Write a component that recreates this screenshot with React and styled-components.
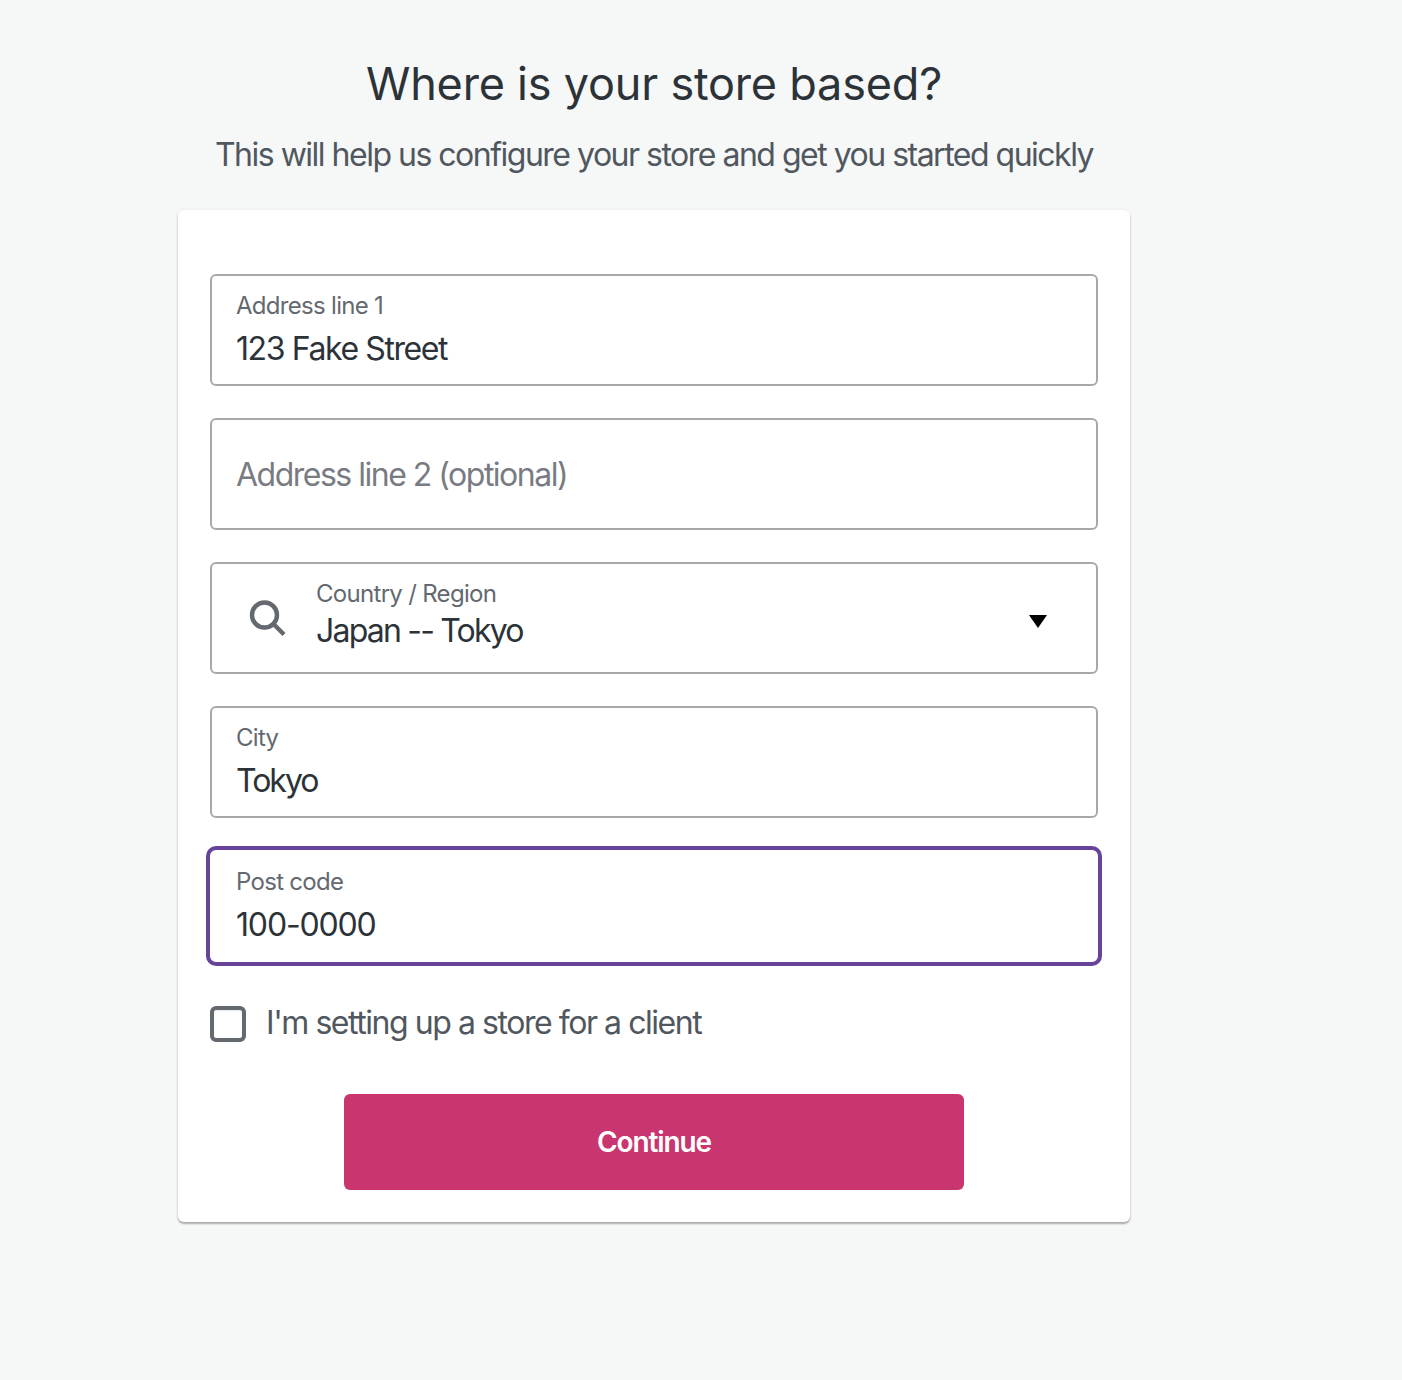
import React from "react";
import styled, { createGlobalStyle } from "styled-components";

const GlobalStyle = createGlobalStyle`
  html, body {
    margin: 0;
    padding: 0;
    background-color: #f6f7f7;
    font-family: Inter, "Liberation Sans", sans-serif;
  }
`;

const Page = styled.div`
  box-sizing: border-box;
  width: 1402px;
  height: 1380px;
  padding: 0 0 0 178px;
`;

const Column = styled.div`
  width: 952px;
  display: flex;
  flex-direction: column;
  align-items: center;
`;

const Title = styled.h1`
  margin: 54px 0 0 0;
  height: 60px;
  font-size: 45px;
  line-height: 60px;
  font-weight: 400;
  letter-spacing: -0.2px;
  color: #2c3338;
  white-space: nowrap;
`;

const Subtitle = styled.p`
  margin: 18px 0 0 0;
  height: 48px;
  font-size: 32px;
  line-height: 46px;
  font-weight: 400;
  letter-spacing: -1.5px;
  color: #50575e;
  white-space: nowrap;
`;

const Card = styled.form`
  box-sizing: border-box;
  width: 952px;
  height: 1012px;
  margin-top: 30px;
  padding: 64px 32px 32px;
  background-color: #fff;
  border-radius: 6px;
  box-shadow: 0 2px 2px rgba(0, 0, 0, 0.3), 0 0 4px rgba(0, 0, 0, 0.06);
  display: flex;
  flex-direction: column;
  gap: 32px;
`;

const Field = styled.label`
  box-sizing: border-box;
  width: 888px;
  height: 112px;
  border: 2px solid ${(props) => (props.$focused ? "#fff" : "#a7aaad")};
  border-radius: 6px;
  padding: 0 24px;
  display: flex;
  flex-direction: column;
  justify-content: ${(props) => (props.$empty ? "center" : "flex-start")};
  background-color: #fff;
  box-shadow: ${(props) => (props.$focused ? "0 0 0 4px #674399" : "none")};
`;

const FieldLabel = styled.span`
  margin-top: 14px;
  height: 32px;
  font-size: 24px;
  line-height: 32px;
  letter-spacing: -0.7px;
  color: #646970;
`;

const FieldValue = styled.span`
  margin-top: 5px;
  height: 44px;
  font-size: 32px;
  line-height: 44px;
  letter-spacing: ${(props) => props.$spacing}px;
  color: #2c3338;
`;

const Placeholder = styled.span`
  padding-top: 1px;
  font-size: 32px;
  line-height: 44px;
  letter-spacing: -1.5px;
  color: #787c82;
`;

const SelectField = styled(Field)`
  flex-direction: row;
  align-items: center;
  justify-content: flex-start;
  padding: 0 49px 0 32px;
`;

const SearchIcon = styled.svg`
  width: 46px;
  height: 46px;
  flex-shrink: 0;
  margin-right: 26px;
  fill: none;
  stroke: #646970;
  stroke-width: 4.4;
`;

const SelectText = styled.div`
  flex: 1;
  display: flex;
  flex-direction: column;
  margin-top: -4px;
`;

const SelectLabel = styled(FieldLabel)`
  margin-top: 0;
  height: 30px;
  line-height: 30px;
`;

const SelectValue = styled(FieldValue)`
  margin-top: 0;
  height: 44px;
`;

const Caret = styled.span`
  width: 0;
  height: 0;
  margin-top: 6px;
  border-left: 9px solid transparent;
  border-right: 9px solid transparent;
  border-top: 13px solid #000;
`;

const CheckRow = styled.label`
  display: flex;
  align-items: center;
  gap: 20px;
  height: 36px;
  margin-top: 12px;
`;

const CheckBox = styled.span`
  box-sizing: border-box;
  width: 36px;
  height: 36px;
  border: 4px solid #646970;
  border-radius: 6px;
  background-color: #fff;
  box-shadow: inset 0 1px 2px rgba(0, 0, 0, 0.1);
`;

const CheckText = styled.span`
  margin-top: -2px;
  font-size: 32px;
  line-height: 44px;
  letter-spacing: -1.45px;
  color: #50575e;
`;

const SubmitRow = styled.div`
  display: flex;
  justify-content: center;
  margin-top: 20px;
`;

const ContinueButton = styled.button`
  width: 620px;
  height: 96px;
  border: none;
  border-radius: 6px;
  background-color: #c9356e;
  color: #fff;
  font-family: inherit;
  font-size: 28px;
  font-weight: 600;
  letter-spacing: -1.1px;
`;

const fields = [
  { label: "Address line 1", value: "123 Fake Street", spacing: -1.4 },
  { placeholder: "Address line 2 (optional)" },
  { select: true, label: "Country / Region", value: "Japan -- Tokyo", spacing: -1.8 },
  { label: "City", value: "Tokyo", spacing: -2 },
  { label: "Post code", value: "100-0000", spacing: -1.15, focused: true },
];

function App() {
  return (
    <Page>
      <GlobalStyle />
      <Column>
        <Title>Where is your store based?</Title>
        <Subtitle>This will help us configure your store and get you started quickly</Subtitle>
        <Card>
          {fields.map((field) => {
            if (field.select) {
              return (
                <SelectField key={field.label}>
                  <SearchIcon viewBox="0 0 46 46">
                    <circle cx="20.500" cy="20" r="12.500" />
                    <line x1="29.500" y1="29" x2="40" y2="39.500" />
                  </SearchIcon>
                  <SelectText>
                    <SelectLabel>{field.label}</SelectLabel>
                    <SelectValue $spacing={field.spacing}>{field.value}</SelectValue>
                  </SelectText>
                  <Caret />
                </SelectField>
              );
            }
            if (field.placeholder) {
              return (
                <Field key={field.placeholder} $empty>
                  <Placeholder>{field.placeholder}</Placeholder>
                </Field>
              );
            }
            return (
              <Field key={field.label} $focused={field.focused}>
                <FieldLabel>{field.label}</FieldLabel>
                <FieldValue $spacing={field.spacing}>{field.value}</FieldValue>
              </Field>
            );
          })}
          <CheckRow>
            <CheckBox />
            <CheckText>I'm setting up a store for a client</CheckText>
          </CheckRow>
          <SubmitRow>
            <ContinueButton type="button">Continue</ContinueButton>
          </SubmitRow>
        </Card>
      </Column>
    </Page>
  );
}

export default App;
